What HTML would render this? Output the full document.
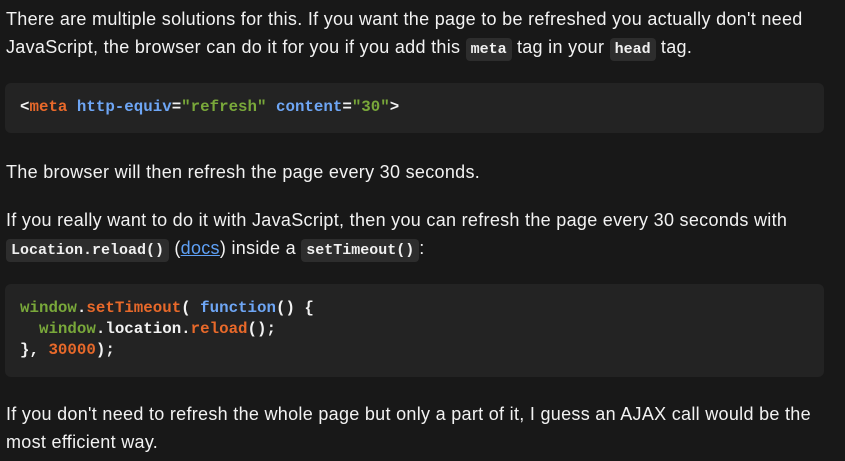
<!DOCTYPE html>
<html><head><meta charset="utf-8"><style>
body{margin:0;background:#181818;width:845px;height:461px;overflow:hidden;font-family:"Liberation Sans",sans-serif;color:#f2f2f2;font-size:18px;letter-spacing:0.3px;}
.p{position:absolute;left:6px;line-height:27px;white-space:nowrap;}
code{font-family:"Liberation Mono",monospace;font-size:15px;letter-spacing:0;font-weight:bold;background:#2d2d2d;padding:3px 5px;border-radius:4px;color:#f0f0f0;}
.pre{position:absolute;left:5px;width:819px;background:#232323;border-radius:6px;font-family:"Liberation Mono",monospace;font-size:15.8px;letter-spacing:0;font-weight:bold;white-space:pre;}
.o{color:#e8692a}.b{color:#6ea6f5}.g{color:#79a83a}.w{color:#f2f2f2}
a{color:#5ea0f5}
</style></head><body>
<div class="p" style="top:6px">There are multiple solutions for this. If you want the page to be refreshed you actually don't need</div>
<div class="p" style="top:34px">JavaScript, the browser can do it for you if you add this <code>meta</code> tag in your <code>head</code> tag.</div>
<div class="pre" style="top:83px;height:50px"><div style="position:absolute;left:15px;top:15px">&lt;<span class="o">meta</span> <span class="b">http-equiv</span>=<span class="g">"refresh"</span> <span class="b">content</span>=<span class="g">"30"</span>&gt;</div></div>
<div class="p" style="top:159px">The browser will then refresh the page every 30 seconds.</div>
<div class="p" style="top:207px">If you really want to do it with JavaScript, then you can refresh the page every 30 seconds with</div>
<div class="p" style="top:235px"><code>Location.reload()</code> (<a href="#">docs</a>) inside a <code>setTimeout()</code>:</div>
<div class="pre" style="top:284px;height:93px"><div style="position:absolute;left:15px;top:14px;line-height:21px"><span class="g">window</span>.<span class="o">setTimeout</span>( <span class="b">function</span>() {
  <span class="g">window</span>.location.<span class="o">reload</span>();
}, <span class="o">30000</span>);</div></div>
<div class="p" style="top:401px">If you don't need to refresh the whole page but only a part of it, I guess an AJAX call would be the</div>
<div class="p" style="top:429px">most efficient way.</div>
</body></html>
